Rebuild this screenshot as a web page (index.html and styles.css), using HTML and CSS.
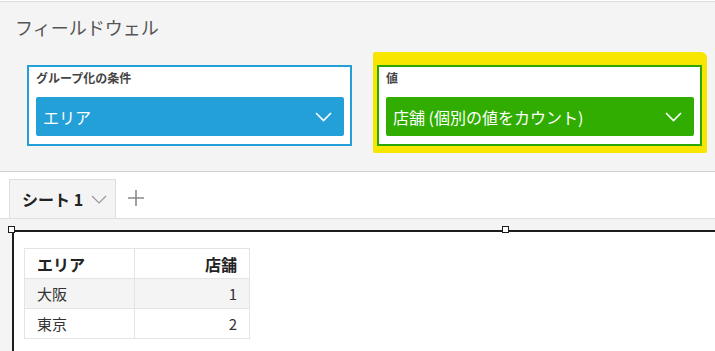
FILE: index.html
```html
<!DOCTYPE html>
<html lang="ja">
<head>
    <meta charset="UTF-8">
    <meta name="viewport" content="width=device-width, initial-scale=1.0">
    <title>フィールドウェル</title>
    <link rel="stylesheet" href="styles.css">
</head>
<body>
    <div class="wells">
        <h2 class="wells-title">フィールドウェル</h2>
        <div class="well-row">
            <div class="well well-blue">
                <div class="well-label">グループ化の条件</div>
                <div class="pill pill-blue">
                    <span>エリア</span>
                    <svg class="chev" width="17" height="10" viewBox="0 0 17 10"><path d="M1 1 L8.5 8.5 L16 1" fill="none" stroke="#fff" stroke-width="1.6"/></svg>
                </div>
            </div>
            <div class="highlight">
                <div class="well well-green">
                    <div class="well-label">値</div>
                    <div class="pill pill-green">
                        <span>店舗 (個別の値をカウント)</span>
                        <svg class="chev" width="17" height="10" viewBox="0 0 17 10"><path d="M1 1 L8.5 8.5 L16 1" fill="none" stroke="#fff" stroke-width="1.6"/></svg>
                    </div>
                </div>
            </div>
        </div>
    </div>

    <div class="tabs">
        <div class="tab">
            <span>シート 1</span>
            <svg width="16" height="9" viewBox="0 0 16 9"><path d="M1 1 L8 8 L15 1" fill="none" stroke="#999" stroke-width="1.2"/></svg>
        </div>
        <svg class="add" width="16" height="16" viewBox="0 0 16 16"><path d="M8 0 V16 M0 8 H16" stroke="#8a8a8a" stroke-width="1.6"/></svg>
    </div>
    <div class="strip"></div>

    <div class="canvas">
        <div class="visual">
            <span class="handle handle-left"></span>
            <span class="handle handle-mid"></span>
            <table class="grid">
                <thead>
                    <tr><th>エリア</th><th class="num">店舗</th></tr>
                </thead>
                <tbody>
                    <tr class="alt"><td>大阪</td><td class="num">1</td></tr>
                    <tr><td>東京</td><td class="num">2</td></tr>
                </tbody>
            </table>
        </div>
    </div>
</body>
</html>
```

FILE: styles.css
```css
body {
    margin: 0;
    font-family: "Noto Sans CJK JP", "Noto Sans", sans-serif;
    color: #333;
    background: #fff;
    width: 715px;
    height: 351px;
    overflow: hidden;
}
.wells {
    background: #f4f4f4;
    border-top: 1px solid #dcdcdc;
    margin-top: 1px;
    border-bottom: 1px solid #d0d0d0;
    height: 169px;
}
.wells-title {
    margin: 0;
    padding: 12px 0 0 15px;
    font-size: 18px;
    font-weight: normal;
    line-height: 26px;
    color: #555;
}
.well-row {
    display: flex;
    gap: 25px;
    padding: 25px 0 0 27px;
}
.well {
    width: 321px;
    height: 77px;
    background: #fff;
    padding: 0;
    border: 2px solid #24a0d9;
    display: flex;
    flex-direction: column;
}
.well-green {
    border-color: #2aa800;
}
.well-label {
    font-size: 12px;
    font-weight: bold;
    line-height: 16px;
    padding: 3px 0 0 7px;
    height: 27px;
    box-sizing: border-box;
    color: #444;
}
.pill {
    margin: 3px 6px 0 7px;
    height: 39px;
    border-radius: 2px;
    display: flex;
    align-items: center;
    justify-content: space-between;
    padding: 0 12px 0 7px;
    color: #fff;
    font-size: 16px;
}
.pill-blue {
    background: #24a0d9;
}
.pill-green {
    background: #30ad00;
}
.highlight {
    background: #f8e500;
    padding: 13px 5px 7px 4px;
    margin: -13px 0 -7px -4px;
    border-radius: 2px 6px 2px 2px;
}
.tabs {
    height: 46px;
    display: flex;
    align-items: flex-end;
    padding-left: 9px;
    gap: 12px;
}
.tab {
    height: 39px;
    width: 107px;
    box-sizing: border-box;
    background: #f4f4f4;
    border: 1px solid #dedede;
    border-bottom: none;
    display: flex;
    align-items: center;
    gap: 8px;
    padding-left: 12px;
    font-size: 16px;
    font-weight: bold;
    color: #222;
}
.add {
    margin-bottom: 12px;
}
.strip {
    height: 11px;
    background: #f4f4f4;
    border-top: 1px solid #dedede;
}
.canvas {
    background: #f4f4f4;
    padding-left: 12px;
    height: 130px;
}
.visual {
    position: relative;
    background: #fff;
    border-top: 2px solid #1d1d1d;
    border-left: 2px solid #1d1d1d;
    height: 128px;
    padding: 16px 0 0 10px;
    box-sizing: border-box;
}
.handle {
    position: absolute;
    width: 5px;
    height: 5px;
    background: #fff;
    border: 1.5px solid #1d1d1d;
    top: -6px;
}
.handle-left {
    left: -6px;
}
.handle-mid {
    left: 488px;
}
.grid {
    border-collapse: collapse;
    font-size: 15px;
}
.grid th, .grid td {
    border: 1px solid #e4e4e4;
    height: 29px;
    padding: 0 12px;
    text-align: left;
    line-height: 20px;
}
.grid th {
    font-size: 16px;
    color: #222;
}
.grid th:first-child, .grid td:first-child {
    width: 85px;
}
.grid th.num, .grid td.num {
    width: 90px;
    text-align: right;
}
.alt {
    background: #f4f4f4;
}
```
